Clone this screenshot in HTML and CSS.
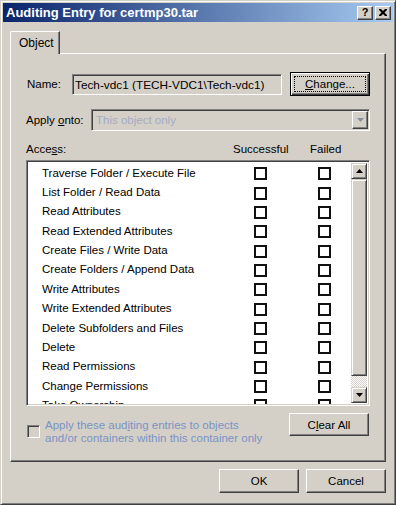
FILE: index.html
```html
<!DOCTYPE html>
<html>
<head>
<meta charset="utf-8">
<link rel="stylesheet" href="styles.css">
</head>
<body>
<div class="window">
  <div class="titlebar">
    <span class="title">Auditing Entry for certmp30.tar</span>
    <div class="tb-buttons">
      <div class="tb-btn help">?</div>
      <div class="tb-btn close">
        <svg width="8" height="7" viewBox="0 0 8 7"><path d="M0 0h2l2 2 2-2h2v1L5.5 3.5 8 6v1H6L4 5 2 7H0V6l2.5-2.5L0 1z" fill="#000"/></svg>
      </div>
    </div>
  </div>
  <div class="client">
    <div class="tabs"><div class="tab">Object</div></div>
    <div class="panel">
      <div class="name-row">
        <span class="lbl name-lbl">Name:</span>
        <div class="edit">Tech-vdc1 (TECH-VDC1\Tech-vdc1)</div>
        <div class="btn default"><span class="focus"><u>C</u>hange...</span></div>
      </div>
      <div class="apply-row">
        <span class="lbl apply-lbl">Apply <u>o</u>nto:</span>
        <div class="combo">
          <span class="combo-text">This object only</span>
          <div class="combo-btn"><svg width="7" height="4" viewBox="0 0 7 4"><path d="M0 0h7L3.5 4z" fill="#8a8f9f"/></svg></div>
        </div>
      </div>
      <div class="access-head">
        <span class="col-access">Acce<u>s</u>s:</span>
        <span class="col-succ">Successful</span>
        <span class="col-fail">Failed</span>
      </div>
      <div class="listbox">
        <div class="rows">
          <div class="row"><span>Traverse Folder / Execute File</span><i class="cb"></i><i class="cb"></i></div>
          <div class="row"><span>List Folder / Read Data</span><i class="cb"></i><i class="cb"></i></div>
          <div class="row"><span>Read Attributes</span><i class="cb"></i><i class="cb"></i></div>
          <div class="row"><span>Read Extended Attributes</span><i class="cb"></i><i class="cb"></i></div>
          <div class="row"><span>Create Files / Write Data</span><i class="cb"></i><i class="cb"></i></div>
          <div class="row"><span>Create Folders / Append Data</span><i class="cb"></i><i class="cb"></i></div>
          <div class="row"><span>Write Attributes</span><i class="cb"></i><i class="cb"></i></div>
          <div class="row"><span>Write Extended Attributes</span><i class="cb"></i><i class="cb"></i></div>
          <div class="row"><span>Delete Subfolders and Files</span><i class="cb"></i><i class="cb"></i></div>
          <div class="row"><span>Delete</span><i class="cb"></i><i class="cb"></i></div>
          <div class="row"><span>Read Permissions</span><i class="cb"></i><i class="cb"></i></div>
          <div class="row"><span>Change Permissions</span><i class="cb"></i><i class="cb"></i></div>
          <div class="row"><span>Take Ownership</span><i class="cb"></i><i class="cb"></i></div>
        </div>
        <div class="scrollbar">
          <div class="sb-btn"><svg width="7" height="4" viewBox="0 0 7 4"><path d="M3.5 0L7 4H0z" fill="#000"/></svg></div>
          <div class="sb-thumb"></div>
          <div class="sb-track"></div>
          <div class="sb-btn"><svg width="7" height="4" viewBox="0 0 7 4"><path d="M0 0h7L3.5 4z" fill="#000"/></svg></div>
        </div>
      </div>
      <div class="bottom-row">
        <i class="cb-disabled"></i>
        <span class="disabled-text">Apply these aud<u>i</u>ting entries to objects<br>and/or containers within this container only</span>
        <div class="btn clear">C<u>l</u>ear All</div>
      </div>
    </div>
    <div class="footer">
      <div class="btn">OK</div>
      <div class="btn">Cancel</div>
    </div>
  </div>
</div>
</body>
</html>
```
FILE: styles.css
```css
* { box-sizing: border-box; }
html, body { margin: 0; padding: 0; background: #d4d0c8; }
body {
  font-family: "Liberation Sans", Arial, sans-serif;
  font-size: 11.5px;
  color: #000;
}
.window {
  width: 396px;
  height: 505px;
  background: #d4d0c8;
  border: 1px solid;
  border-color: #d4d0c8 #404040 #404040 #d4d0c8;
  box-shadow: inset 1px 1px 0 #fff, inset -1px -1px 0 #808080;
  padding: 2px;
  display: flex;
  flex-direction: column;
}
.titlebar {
  height: 19px;
  background: linear-gradient(to right, #0a246a, #a6caf0);
  display: flex;
  align-items: center;
  justify-content: space-between;
  padding: 0 2px 0 3px;
}
.title {
  color: #fff;
  font-weight: bold;
  font-size: 13px;
}
.tb-buttons { display: flex; gap: 2px; }
.tb-btn {
  width: 16px;
  height: 14px;
  background: #d4d0c8;
  border: 1px solid;
  border-color: #fff #404040 #404040 #fff;
  box-shadow: inset -1px -1px 0 #808080;
  display: flex;
  align-items: center;
  justify-content: center;
  font-weight: bold;
  font-size: 11px;
  line-height: 1;
}
.client {
  flex: 1;
  padding: 9px 7px 0 7px;
  display: flex;
  flex-direction: column;
}
.tabs { display: flex; height: 22px; position: relative; z-index: 1; }
.tab {
  width: 50px;
  height: 23px;
  background: #d4d0c8;
  border: 1px solid;
  border-color: #fff #404040 transparent #fff;
  border-bottom: none;
  border-top-left-radius: 2px;
  box-shadow: inset -1px 0 0 #808080;
  padding: 4px 0 0 8px;
  font-size: 12px;
}
.panel {
  height: 409px;
  border: 1px solid;
  border-color: #fff #404040 #404040 #fff;
  box-shadow: inset -1px -1px 0 #808080;
  padding: 18px 15px 0 15px;
  display: flex;
  flex-direction: column;
}
.name-row { display: flex; align-items: center; height: 24px; }
.name-lbl { width: 46px; padding-left: 1px; }
.edit {
  width: 210px;
  height: 21px;
  border: 1px solid;
  border-color: #808080 #fff #fff #808080;
  box-shadow: inset 1px 1px 0 #404040;
  padding: 3px 0 0 2px;
  white-space: nowrap;
  font-size: 11.8px;
}
.btn {
  width: 80px;
  height: 24px;
  background: #d4d0c8;
  border: 1px solid;
  border-color: #fff #404040 #404040 #fff;
  box-shadow: inset -1px -1px 0 #808080;
  display: flex;
  align-items: center;
  justify-content: center;
}
.btn.default {
  margin-left: 8px;
  border: 1px solid #000;
  box-shadow: inset 1px 1px 0 #fff, inset -1px -1px 0 #404040, inset -2px -2px 0 #808080;
  padding: 3px;
}
.focus {
  flex: 1;
  align-self: stretch;
  border: 1px dotted #000;
  display: flex;
  align-items: center;
  justify-content: center;
}
.apply-row { display: flex; align-items: center; margin-top: 13px; height: 22px; }
.apply-lbl { width: 65px; }
.combo {
  width: 279px;
  height: 22px;
  border: 1px solid;
  border-color: #808080 #fff #fff #808080;
  box-shadow: inset 1px 1px 0 #404040;
  display: flex;
  align-items: center;
  padding: 1px 1px 1px 4px;
}
.combo-text { flex: 1; color: #a3abc2; }
.combo-btn {
  width: 16px;
  height: 18px;
  border: 1px solid;
  border-color: #fff #404040 #404040 #fff;
  box-shadow: inset -1px -1px 0 #808080;
  display: flex;
  align-items: center;
  justify-content: center;
}
.access-head { display: flex; margin-top: 11px; height: 14px; line-height: 14px; }
.col-access { width: 207px; }
.col-succ { width: 77px; }
.listbox {
  margin-top: 4px;
  height: 246px;
  border: 1px solid;
  border-color: #808080 #fff #fff #808080;
  box-shadow: inset 1px 1px 0 #404040, inset -1px -1px 0 #d4d0c8;
  background: #fff;
  padding: 2px 2px 0 2px;
  display: flex;
}
.rows { flex: 1; overflow: hidden; padding-top: 1px; margin-bottom: 1px; }
.row {
  height: 19.36px;
  display: grid;
  grid-template-columns: 212px 64px 13px;
  align-items: center;
  padding-left: 13px;
  white-space: nowrap;
}
.row span { position: relative; top: -1px; }
.cb {
  display: block;
  width: 13px;
  height: 13px;
  border: 2px solid #111;
  background: #fff;
}
.scrollbar { width: 16px; display: flex; flex-direction: column; margin-bottom: 2px; }
.sb-btn, .sb-thumb {
  background: #d4d0c8;
  border: 1px solid;
  border-color: #d4d0c8 #404040 #404040 #d4d0c8;
  box-shadow: inset 1px 1px 0 #fff, inset -1px -1px 0 #808080;
}
.sb-btn { height: 16px; display: flex; align-items: center; justify-content: center; }
.sb-thumb { height: 197px; }
.sb-track {
  flex: 1;
  background: repeating-conic-gradient(#d4d0c8 0 25%, #fff 0 50%) 0 0 / 2px 2px;
}
.bottom-row { display: flex; align-items: flex-start; margin-top: 7px; }
.cb-disabled {
  display: block;
  width: 13px;
  height: 13px;
  margin: 12px 0 0 1px;
  border: 1px solid;
  border-color: #808080 #fff #fff #808080;
  box-shadow: inset 1px 1px 0 #404040;
}
.disabled-text {
  margin: 6px 0 0 5px;
  color: #7b93c4;
  line-height: 13px;
  flex: 1;
}
.btn.clear { width: 80px; height: 23px; margin-right: 1px; }
.footer {
  display: flex;
  justify-content: flex-end;
  gap: 7px;
  margin-top: 7px;
}
```
